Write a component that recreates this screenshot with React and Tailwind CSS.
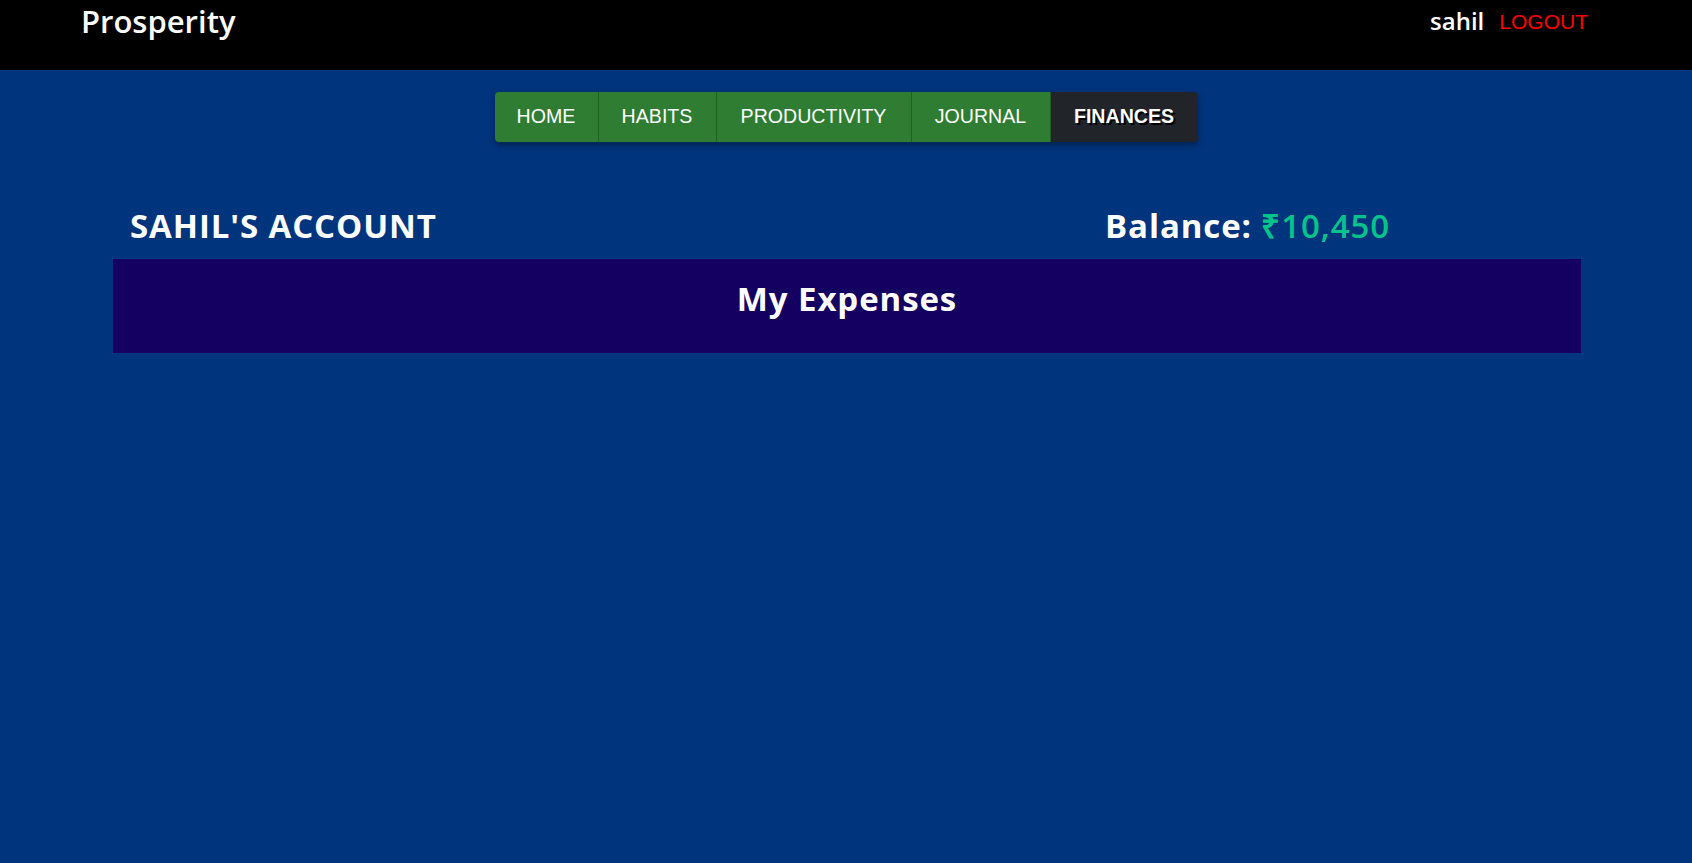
const navItems = [
  { label: "HOME", w: "w-[104px]" },
  { label: "HABITS", w: "w-[118px]" },
  { label: "PRODUCTIVITY", w: "w-[195px]" },
  { label: "JOURNAL", w: "w-[139px]" },
];

const App = () => {
  return (
    <div className="min-h-screen w-full bg-[#00347c] font-['Open_Sans',sans-serif]">
      <header className="h-[70px] bg-black flex items-start justify-between pl-[81px] pr-[104px]">
        <h1 className="text-white text-[31px] font-semibold leading-none pt-[6px]">Prosperity</h1>
        <div className="flex items-center gap-[15px] pt-[9px]">
          <span className="text-white text-[24px] font-semibold leading-none">sahil</span>
          <button className="text-[#ff0000] text-[21px] leading-none font-['Liberation_Sans',Arial,sans-serif]">
            LOGOUT
          </button>
        </div>
      </header>

      <div className="flex justify-center pt-[22px]">
        <nav className="flex h-[50px] rounded-[4px] overflow-hidden shadow-[0_3px_6px_rgba(0,0,0,0.35)] font-['Liberation_Sans',Arial,sans-serif] text-[19.6px]">
          {navItems.map((item) => (
            <a
              key={item.label}
              className={`${item.w} flex items-center justify-center bg-[#2e7d32] text-white border-r border-[#1f6023]`}
            >
              {item.label}
            </a>
          ))}
          <a className="w-[147px] flex items-center justify-center bg-[#212529] text-white font-bold [text-shadow:2px_2px_0_#000]">
            FINANCES
          </a>
        </nav>
      </div>

      <div className="pl-[113px] pr-[111px] pt-[39px]">
        <div className="flex justify-between items-end pl-[17px] pr-[191px] h-[78px]">
          <h2 className="text-white text-[33px] font-bold leading-none pb-[17px] tracking-[0.9px]">
            SAHIL'S ACCOUNT
          </h2>
          <h2 className="text-white text-[33px] font-bold leading-none pb-[17px] tracking-[0.9px]">
            Balance: <span className="text-[#00c48c] font-semibold">₹10,450</span>
          </h2>
        </div>
        <div className="h-[94px] bg-[#140060] flex justify-center pt-[23px]">
          <h2 className="text-white text-[33px] font-bold leading-none h-fit tracking-[0.9px]">My Expenses</h2>
        </div>
      </div>
    </div>
  );
};

export default App;
